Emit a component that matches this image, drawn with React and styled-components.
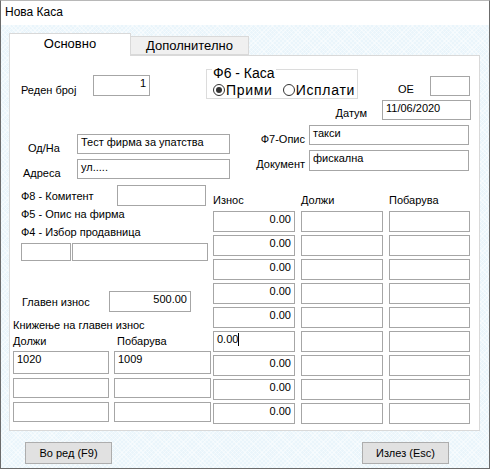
import styled, { createGlobalStyle } from "styled-components";

const GlobalStyle = createGlobalStyle`
  html, body {
    margin: 0;
    padding: 0;
    background: #ffffff;
  }
  body {
    font-family: "Liberation Sans", Arial, sans-serif;
    font-size: 11px;
    color: #000;
  }
`;

const gridRows = [
  "0.00",
  "0.00",
  "0.00",
  "0.00",
  "0.00",
  "caret",
  "0.00",
  "0.00",
  "0.00",
];

const bookingRows = [
  { debit: "1020", credit: "1009", h: 23 },
  { debit: "", credit: "", h: 20 },
  { debit: "", credit: "", h: 20 },
];

const App = () => {
  return (
    <>
      <GlobalStyle />
      <Window>
        <TitleBar>Нова Каса</TitleBar>
        <Body>
          <TabStrip>
            <Tab $active>Основно</Tab>
            <Tab>Дополнително</Tab>
          </TabStrip>
          <Panel>
            <TopRow>
              <Label $w={72} $ml={11} $mt={15}>
                Реден број
              </Label>
              <Field $w={57} $h={21} $mt={6} $align="right">
                1
              </Field>
              <Group>
                <GroupTitle>Ф6 - Каса</GroupTitle>
                <Radio>
                  <RadioDot $checked />
                  Прими
                </Radio>
                <Radio>
                  <RadioDot />
                  Исплати
                </Radio>
              </Group>
              <Label $w={15} $ml={40} $mt={14}>
                ОЕ
              </Label>
              <Field $w={40} $h={20} $mt={7} $ml={17} />
            </TopRow>

            <DateRow>
              <Label $mt={9} $mr={15}>
                Датум
              </Label>
              <Field $w={89} $h={20} $mt={2}>
                11/06/2020
              </Field>
            </DateRow>

            <PartyRow>
              <Column>
                <Line $mt={14}>
                  <Label $w={67} $pl={18} $mt={8}>
                    Од/На
                  </Label>
                  <Field $w={153} $h={20}>
                    Тест фирма за упатства
                  </Field>
                </Line>
                <Line $mt={4}>
                  <Label $w={67} $pl={13} $mt={8}>
                    Адреса
                  </Label>
                  <Field $w={153} $h={20}>
                    ул.....
                  </Field>
                </Line>
              </Column>
              <Column $ml={24}>
                <Line $mt={5}>
                  <Label $w={51} $mt={8} $right $mr={4}>
                    Ф7-Опис
                  </Label>
                  <Field $w={160} $h={20}>
                    такси
                  </Field>
                </Line>
                <Line $mt={4}>
                  <Label $w={51} $mt={8} $right $mr={4}>
                    Документ
                  </Label>
                  <Field $w={160} $h={21}>
                    фискална
                  </Field>
                </Line>
              </Column>
            </PartyRow>

            <BottomRow>
              <LeftColumn>
                <Line $mt={7}>
                  <Label $w={104} $pl={8} $mt={5}>
                    Ф8 - Комитент
                  </Label>
                  <Field $w={89} $h={21} />
                </Line>
                <Label $pl={8} $mt={2}>
                  Ф5 - Опис на фирма
                </Label>
                <Label $pl={8} $mt={5}>
                  Ф4 - Избор продавница
                </Label>
                <Line $mt={4} $ml={8} $gap={1}>
                  <Field $w={50} $h={18} />
                  <Field $w={136} $h={18} />
                </Line>
                <Line $mt={30}>
                  <Label $w={96} $pl={9} $mt={5}>
                    Главен износ
                  </Label>
                  <Field $w={82} $h={21} $align="right">
                    500.00
                  </Field>
                </Line>
                <Label $mt={7}>Книжење на главен износ</Label>
                <Line $mt={3}>
                  <Label $w={104}>Должи</Label>
                  <Label>Побарува</Label>
                </Line>
                <BookingList>
                  {bookingRows.map((row, i) => (
                    <Line key={i} $gap={5}>
                      <Field $w={96} $h={row.h}>
                        {row.debit}
                      </Field>
                      <Field $w={97} $h={row.h}>
                        {row.credit}
                      </Field>
                    </Line>
                  ))}
                </BookingList>
              </LeftColumn>

              <AmountGrid>
                <HeadCell>Износ</HeadCell>
                <HeadCell>Должи</HeadCell>
                <HeadCell>Побарува</HeadCell>
                {gridRows.map((value, i) => (
                  <GridLine key={i}>
                    {value === "caret" ? (
                      <Field $h={21}>
                        0.00
                        <Caret />
                      </Field>
                    ) : (
                      <Field $h={21} $align="right">
                        {value}
                      </Field>
                    )}
                    <Field $h={21} />
                    <Field $h={21} />
                  </GridLine>
                ))}
              </AmountGrid>
            </BottomRow>
          </Panel>

          <ButtonBar>
            <Button>Во ред (F9)</Button>
            <Button>Излез (Esc)</Button>
          </ButtonBar>
        </Body>
      </Window>
    </>
  );
};

export default App;

const Window = styled.div`
  width: 490px;
  height: 469px;
  box-sizing: border-box;
  border: 1px solid #6b6b6b;
  border-top-color: #b8b8b8;
  display: flex;
  flex-direction: column;
  overflow: hidden;
`;

const TitleBar = styled.div`
  height: 24px;
  background: #ffffff;
  font-size: 12px;
  line-height: 23px;
  padding-left: 4px;
`;

const Body = styled.div`
  flex: 1;
  background-color: #eaf5fb;
  background-image: repeating-linear-gradient(
      45deg,
      rgba(255, 255, 255, 0.45) 0 1px,
      transparent 1px 3px
    ),
    repeating-linear-gradient(
      -45deg,
      rgba(255, 255, 255, 0.45) 0 1px,
      transparent 1px 3px
    );
  padding: 8px 10px 0 8px;
  display: flex;
  flex-direction: column;
`;

const TabStrip = styled.div`
  display: flex;
  align-items: flex-end;
  height: 22px;
  position: relative;
  z-index: 1;
`;

const Tab = styled.div`
  box-sizing: border-box;
  width: ${(p) => (p.$active ? "122px" : "118px")};
  height: ${(p) => (p.$active ? "23px" : "19px")};
  margin-bottom: ${(p) => (p.$active ? "-1px" : "0")};
  background: ${(p) => (p.$active ? "#ffffff" : "#f0f0f0")};
  border: 1px solid #d9d9d9;
  border-bottom: ${(p) => (p.$active ? "none" : "1px solid #d9d9d9")};
  border-left: ${(p) => (p.$active ? "1px solid #d9d9d9" : "none")};
  font-size: 13px;
  display: flex;
  align-items: center;
  justify-content: center;
  padding-bottom: ${(p) => (p.$active ? "3px" : "0")};
`;

const Panel = styled.div`
  box-sizing: border-box;
  width: 471px;
  height: 376px;
  background: #ffffff;
  border: 1px solid #d9d9d9;
  display: flex;
  flex-direction: column;
`;

const TopRow = styled.div`
  display: flex;
  align-items: flex-start;
  padding-top: 13px;
  height: 29px;
`;

const DateRow = styled.div`
  display: flex;
  align-items: flex-start;
  justify-content: flex-end;
  padding-right: 8px;
  height: 22px;
`;

const PartyRow = styled.div`
  display: flex;
  height: 58px;
`;

const BottomRow = styled.div`
  display: flex;
  padding-left: 3px;
`;

const Column = styled.div`
  display: flex;
  flex-direction: column;
  margin-left: ${(p) => p.$ml || 0}px;
`;

const LeftColumn = styled.div`
  display: flex;
  flex-direction: column;
  width: 200px;
`;

const Line = styled.div`
  display: flex;
  align-items: flex-start;
  gap: ${(p) => p.$gap || 0}px;
  margin-top: ${(p) => p.$mt || 0}px;
  margin-left: ${(p) => p.$ml || 0}px;
`;

const Label = styled.div`
  box-sizing: border-box;
  flex: none;
  ${(p) => (p.$w ? `width: ${p.$w}px;` : "")}
  height: 13px;
  line-height: 13px;
  white-space: nowrap;
  margin-top: ${(p) => p.$mt || 0}px;
  margin-left: ${(p) => p.$ml || 0}px;
  margin-right: ${(p) => p.$mr || 0}px;
  padding-left: ${(p) => p.$pl || 0}px;
  text-align: ${(p) => (p.$right ? "right" : "left")};
`;

const Field = styled.div`
  box-sizing: border-box;
  position: relative;
  flex: none;
  ${(p) => (p.$w ? `width: ${p.$w}px;` : "")}
  height: ${(p) => p.$h || 20}px;
  margin-top: ${(p) => p.$mt || 0}px;
  margin-left: ${(p) => p.$ml || 0}px;
  border: 1px solid #a6a6a6;
  background: #ffffff;
  padding: 1px 3px 0 3px;
  line-height: 13px;
  text-align: ${(p) => p.$align || "left"};
  white-space: nowrap;
  overflow: hidden;
`;

const Caret = styled.span`
  display: inline-block;
  width: 1px;
  height: 13px;
  background: #000;
  vertical-align: top;
`;

const Group = styled.div`
  box-sizing: border-box;
  position: relative;
  width: 152px;
  height: 30px;
  margin-left: 56px;
  border: 1px solid #dcdcdc;
  display: flex;
  align-items: flex-end;
  gap: 10px;
  padding: 0 0 0 6px;
  font-size: 13px;
`;

const GroupTitle = styled.span`
  position: absolute;
  top: -4px;
  left: 5px;
  padding: 0 1px;
  background: #ffffff;
  line-height: 15px;
  font-size: 14px;
`;

const Radio = styled.div`
  display: flex;
  align-items: center;
  gap: 1px;
  line-height: 16px;
  font-size: 14px;
  letter-spacing: 0.7px;
`;

const RadioDot = styled.span`
  box-sizing: border-box;
  width: 12px;
  height: 12px;
  border-radius: 50%;
  border: 1px solid #333333;
  background: #ffffff;
  display: flex;
  align-items: center;
  justify-content: center;

  &::after {
    content: "";
    width: 6px;
    height: 6px;
    border-radius: 50%;
    background: ${(p) => (p.$checked ? "#333333" : "transparent")};
  }
`;

const AmountGrid = styled.div`
  display: grid;
  grid-template-columns: 82px 82px 81px;
  column-gap: 6px;
  row-gap: 3px;
  padding-top: 16px;
  align-content: start;
`;

const HeadCell = styled.div`
  height: 13px;
  line-height: 13px;
  margin-bottom: 1px;
`;

const GridLine = styled.div`
  display: contents;
`;

const BookingList = styled.div`
  display: flex;
  flex-direction: column;
  gap: 4px;
  margin-top: 3px;
`;

const ButtonBar = styled.div`
  display: flex;
  justify-content: space-between;
  padding: 11px 30px 0 16px;
`;

const Button = styled.div`
  box-sizing: border-box;
  width: 87px;
  height: 22px;
  background: #e1e1e1;
  border: 1px solid #adadad;
  display: flex;
  align-items: center;
  justify-content: center;
  font-size: 11px;
`;
